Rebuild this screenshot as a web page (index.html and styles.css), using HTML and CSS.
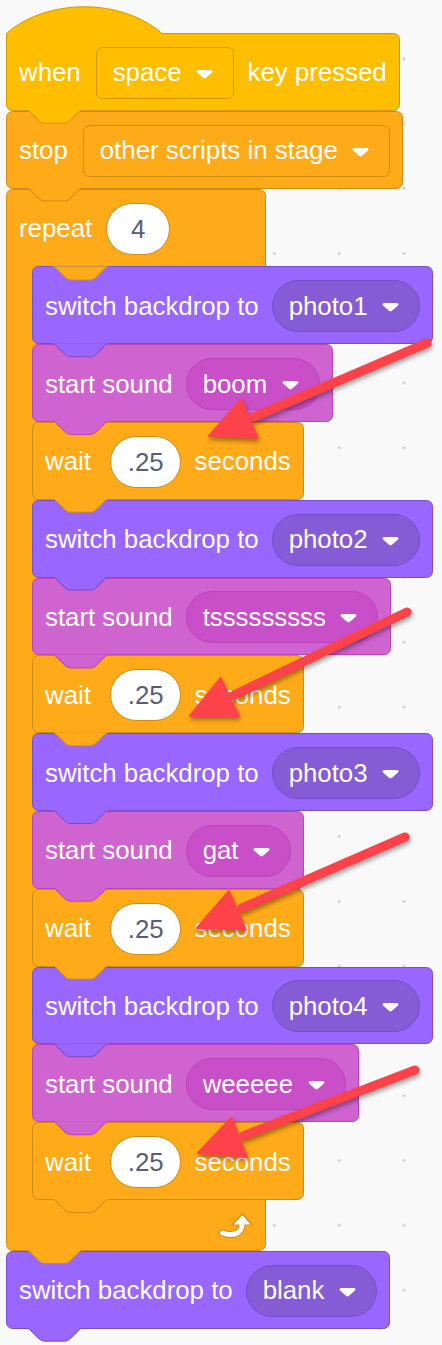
FILE: index.html
```html
<!DOCTYPE html>
<html lang="en">
<head>
    <meta charset="UTF-8">
    <meta name="viewport" content="width=device-width, initial-scale=1.0">
    <title>when space key pressed</title>
    <link rel="stylesheet" href="styles.css">
</head>
<body>
    <svg class="defs" width="0" height="0">
        <symbol id="caret" viewBox="0 0 17 10">
            <path d="M2 1 H15 C16.4 1 17 2.5 16 3.5 L9.7 9.1 C9 9.7 8 9.7 7.3 9.1 L1 3.5 C0 2.5 0.6 1 2 1 Z" fill="#fff"/>
        </symbol>
    </svg>

    <div class="script">
        <div class="block events hat">
            <svg class="cap" width="158" height="30" viewBox="0 0 158 30">
                <path d="M0.5 30 V28.5 C41 -7.1 115.5 -7.1 156 28.5 V30 Z" fill="#ffbf00"/>
                <path d="M0.5 28.5 C41 -7.1 115.5 -7.1 156 28.5" fill="none" stroke="#cc9900"/>
            </svg>
            <span>when</span>
            <span class="menu box"><span>space</span><svg class="caret"><use href="#caret"/></svg></span>
            <span>key pressed</span>
        </div>

        <div class="block control">
            <span>stop</span>
            <span class="menu box"><span>other scripts in stage</span><svg class="caret"><use href="#caret"/></svg></span>
        </div>

        <div class="c-block control">
            <div class="c-head">
                <span>repeat</span>
                <span class="num">4</span>
            </div>

            <div class="substack">
                <div class="block looks">
                    <span>switch backdrop to</span>
                    <span class="menu"><span>photo1</span><svg class="caret"><use href="#caret"/></svg></span>
                </div>
                <div class="block sound">
                    <span>start sound</span>
                    <span class="menu"><span>boom</span><svg class="caret"><use href="#caret"/></svg></span>
                </div>
                <div class="block control">
                    <span class="wait">wait</span>
                    <span class="num">.25</span>
                    <span>seconds</span>
                </div>

                <div class="block looks">
                    <span>switch backdrop to</span>
                    <span class="menu"><span>photo2</span><svg class="caret"><use href="#caret"/></svg></span>
                </div>
                <div class="block sound">
                    <span>start sound</span>
                    <span class="menu"><span>tsssssssss</span><svg class="caret"><use href="#caret"/></svg></span>
                </div>
                <div class="block control">
                    <span class="wait">wait</span>
                    <span class="num">.25</span>
                    <span>seconds</span>
                </div>

                <div class="block looks">
                    <span>switch backdrop to</span>
                    <span class="menu"><span>photo3</span><svg class="caret"><use href="#caret"/></svg></span>
                </div>
                <div class="block sound">
                    <span>start sound</span>
                    <span class="menu"><span>gat</span><svg class="caret"><use href="#caret"/></svg></span>
                </div>
                <div class="block control">
                    <span class="wait">wait</span>
                    <span class="num">.25</span>
                    <span>seconds</span>
                </div>

                <div class="block looks">
                    <span>switch backdrop to</span>
                    <span class="menu"><span>photo4</span><svg class="caret"><use href="#caret"/></svg></span>
                </div>
                <div class="block sound">
                    <span>start sound</span>
                    <span class="menu"><span>weeeee</span><svg class="caret"><use href="#caret"/></svg></span>
                </div>
                <div class="block control">
                    <span class="wait">wait</span>
                    <span class="num">.25</span>
                    <span>seconds</span>
                </div>
            </div>

            <div class="c-foot">
                <svg class="loop" width="34" height="26" viewBox="0 0 34 26">
                    <path d="M23 12 C23.5 21 14 25 3.5 21" fill="none" stroke="#cf8b17" stroke-width="7" stroke-linecap="round"/>
                    <polygon points="23.5,2 13,13 33,13" fill="#fff" stroke="#cf8b17" stroke-width="1.2" stroke-linejoin="round"/>
                    <path d="M23 12 C23.5 21 14 25 3.5 21" fill="none" stroke="#fff" stroke-width="5" stroke-linecap="round"/>
                </svg>
            </div>
        </div>

        <div class="block looks">
            <span>switch backdrop to</span>
            <span class="menu"><span>blank</span><svg class="caret"><use href="#caret"/></svg></span>
        </div>
    </div>

    <!-- red annotation arrows -->
    <svg class="arrows" width="442" height="1345" viewBox="0 0 442 1345">
        <g class="arrow">
            <line x1="427" y1="343" x2="254" y2="417"/>
            <polygon points="209,436 241.3,399.5 257.7,438.1"/>
        </g>
        <g class="arrow">
            <line x1="407" y1="612" x2="234" y2="695"/>
            <polygon points="190,716 220.6,678.1 238.8,715.9"/>
        </g>
        <g class="arrow">
            <line x1="405" y1="837" x2="242" y2="908"/>
            <polygon points="197,928 228.9,891.2 245.7,929.6"/>
        </g>
        <g class="arrow">
            <line x1="415" y1="1070" x2="244" y2="1135.5"/>
            <polygon points="198,1153 231.6,1117.7 246.6,1156.9"/>
        </g>
    </svg>
</body>
</html>
```

FILE: styles.css
```css
html, body {
    margin: 0;
    min-height: 1345px;
}
body {
    position: relative;
    background-color: #f9f9f9;
    background-image: radial-gradient(circle, #cfcfcf 1px, transparent 1.7px);
    background-size: 64.8px 64.8px;
    background-position: 47.6px 26.6px;
    font-family: "Liberation Sans", Arial, sans-serif;
    font-size: 25.8px;
    color: #fff;
}
.defs {
    position: absolute;
}

.events  { --fill: #ffbf00; --line: #cc9900; --menu: #ffbf00; }
.control { --fill: #ffab19; --line: #cf8b17; --menu: #ffab19; }
.looks   { --fill: #9966ff; --line: #774dcb; --menu: #855cd6; }
.sound   { --fill: #cf63cf; --line: #bd42bd; --menu: #c94fc9; }

.script {
    margin: 33px 0 0 6px;
}

.block {
    position: relative;
    display: flex;
    align-items: center;
    gap: 13.5px;
    width: max-content;
    height: 77.8px;
    box-sizing: border-box;
    padding: 2px 12px 0;
    border: 1px solid var(--line);
    border-radius: 6.5px;
    background: var(--fill);
    white-space: nowrap;
}
.hat {
    border-top-left-radius: 0;
}
.cap {
    position: absolute;
    left: -1px;
    top: -29px;
}

/* the tab under each block, drawn over the next one */
.block::before, .block::after,
.c-head::before, .c-head::after,
.c-block::before, .c-block::after {
    content: "";
    position: absolute;
    top: 100%;
    left: 17.4px;
    width: 61px;
    height: 15px;
    z-index: 1;
}
.block::before, .c-head::before, .c-block::before {
    background: var(--line);
    clip-path: path("M0 0 C3.2 0 5 1.9 6.6 3.7 L13 10.1 C14.7 11.8 16.6 14 20.4 14 H39.9 C43.7 14 45.6 11.8 47.3 10.1 L53.7 3.7 C55.3 1.9 57.1 0 60.3 0 Z");
}
.block::after, .c-head::after, .c-block::after {
    background: var(--fill);
    clip-path: path("M1 0 C4.2 0 5.9 1.6 7.5 3.2 L14 9.7 C15.6 11.3 17.2 13 20.4 13 H39.9 C43.1 13 44.7 11.3 46.3 9.7 L52.8 3.2 C54.4 1.6 56.1 0 59.3 0 Z");
}
.c-head::before, .c-head::after {
    left: 43.4px;
}

.menu {
    display: flex;
    align-items: center;
    gap: 14.5px;
    height: 52px;
    box-sizing: border-box;
    padding: 0 20px 0 15.5px;
    border: 1px solid var(--line);
    border-radius: 26px;
    background: var(--menu);
}
.menu.box {
    border-radius: 6.5px;
    margin-left: 2px;
}
.caret {
    width: 17px;
    height: 10px;
    margin-top: 2px;
}

.num {
    min-width: 64.8px;
    height: 52px;
    box-sizing: border-box;
    padding: 0 16.4px;
    border: 1px solid var(--line);
    border-radius: 26px;
    background: #fff;
    color: #575e75;
    line-height: 50px;
    text-align: center;
}
.wait {
    margin-right: 6px;
}

.c-block {
    position: relative;
    width: 260px;
    box-sizing: border-box;
    border: 1px solid var(--line);
    border-radius: 6.5px;
    background: var(--fill);
}
.c-head {
    position: relative;
    display: flex;
    align-items: center;
    gap: 13.5px;
    height: 76.8px;
    box-sizing: border-box;
    padding: 2px 0 0 12px;
    white-space: nowrap;
}
.substack {
    display: flex;
    flex-direction: column;
    align-items: flex-start;
    margin-left: 25px;
}
.c-foot {
    display: flex;
    justify-content: flex-end;
    align-items: center;
    height: 50px;
    padding-right: 12px;
}

.arrows {
    position: absolute;
    left: 0;
    top: 0;
    z-index: 5;
    pointer-events: none;
}
.arrow {
    filter: drop-shadow(1px 3px 2px rgba(0, 0, 0, 0.35));
}
.arrow line {
    stroke: #fd4349;
    stroke-width: 9;
    stroke-linecap: round;
}
.arrow polygon {
    fill: #fd4349;
    stroke: #fd4349;
    stroke-width: 2;
    stroke-linejoin: round;
}
```
